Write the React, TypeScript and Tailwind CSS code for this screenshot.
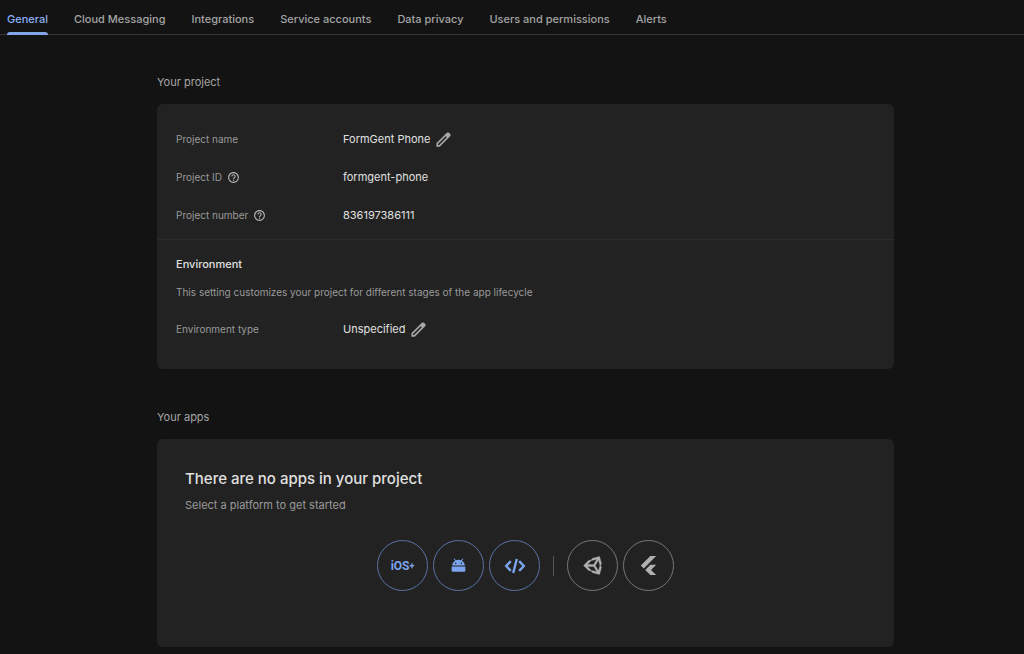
import React from 'react';

type IconProps = { className?: string };

const EditIcon: React.FC<IconProps> = ({ className }) => (
  <svg viewBox="0 -960 960 960" fill="currentColor" className={className} aria-hidden="true">
    <path d="M200-200h57l391-391-57-57-391 391v57Zm-80 80v-170l528-527q12-11 26.5-17t30.5-6q16 0 31 6t26 18l55 56q12 11 17.5 26t5.5 30q0 16-5.5 30.5T817-647L290-120H120Zm499-499-28-29 57 57-29-28Z" />
  </svg>
);

const HelpIcon: React.FC<IconProps> = ({ className }) => (
  <svg viewBox="0 0 24 24" fill="currentColor" className={className} aria-hidden="true">
    <path d="M11 18h2v-2h-2v2zm1-16C6.48 2 2 6.48 2 12s4.48 10 10 10 10-4.48 10-10S17.52 2 12 2zm0 18c-4.41 0-8-3.59-8-8s3.59-8 8-8 8 3.59 8 8-3.59 8-8 8zm0-14c-2.21 0-4 1.79-4 4h2c0-1.1.9-2 2-2s2 .9 2 2c0 2-3 1.75-3 5h2c0-2.25 3-2.5 3-5 0-2.21-1.79-4-4-4z" />
  </svg>
);

const AndroidIcon: React.FC<IconProps> = ({ className }) => (
  <svg viewBox="0 0 14 14" fill="currentColor" className={className} aria-hidden="true">
    <path d="M2.4.9 3 .4l1.5 1.8A6 6 0 0 1 7 1.7c.9 0 1.7.2 2.5.5L11 .4l.6.5-1.4 1.7A5.3 5.3 0 0 1 13 7.1H1a5.3 5.3 0 0 1 2.8-4.5zM4.4 4.2a.7.7 0 1 0 0 1.4.7.7 0 0 0 0-1.4zm5.2 0a.7.7 0 1 0 0 1.4.7.7 0 0 0 0-1.4z" fillRule="evenodd" />
    <path d="M.6 8h12.8v3.8a1 1 0 0 1-1 1H1.6a1 1 0 0 1-1-1z" />
  </svg>
);

const WebIcon: React.FC<IconProps> = ({ className }) => (
  <svg viewBox="0 0 22 16" fill="none" stroke="currentColor" strokeWidth="2.4" className={className} aria-hidden="true">
    <path d="M6.8 3.2 2.2 8l4.6 4.8M15.2 3.2 19.8 8l-4.6 4.8M12.8 1 9.2 15" />
  </svg>
);

const UnityIcon: React.FC<IconProps> = ({ className }) => (
  <svg viewBox="0 0 512 512" fill="currentColor" stroke="currentColor" strokeWidth="12" className={className} aria-hidden="true">
    <path d="M498.11 206.4 445.31 14.72 248.2 66.08l-29.18 50.06-59.22-.44L15.54 256.01 159.8 396.33l59.18-.43 29.22 50.04 197.08 51.36 52.81-191.63-30.01-49.64zM223.77 124.2 374.55 86.51 288 232.33H114.87zm0 263.63L114.87 279.71H288l86.55 145.81zm193 14L330.17 256l86.58-145.84L458.56 256z" />
  </svg>
);

const FlutterIcon: React.FC<IconProps> = ({ className }) => (
  <svg viewBox="0 0 24 24" fill="currentColor" className={className} aria-hidden="true">
    <path d="M14.314 0 2.3 12 6 15.7 21.684.013h-7.357zm.014 11.072L7.857 17.53l6.47 6.47H21.7l-6.46-6.468 6.46-6.46h-7.37z" />
  </svg>
);

const IosMark = () => (
  <span className="flex items-center font-['Roboto',sans-serif] text-xs font-bold">
    iOS<span className="text-[9px]">+</span>
  </span>
);

const tabs = ['General', 'Cloud Messaging', 'Integrations', 'Service accounts', 'Data privacy', 'Users and permissions', 'Alerts'];

const projectRows = [
  { label: 'Project name', value: 'FormGent Phone', editable: true, help: false },
  { label: 'Project ID', value: 'formgent-phone', editable: false, help: true },
  { label: 'Project number', value: '836197386111', editable: false, help: true },
];

const platforms = [
  { id: 'ios', label: 'iOS+', icon: <IosMark />, primary: true },
  { id: 'android', label: 'Android', icon: <AndroidIcon className="size-[15px]" />, primary: true },
  { id: 'web', label: 'Web', icon: <WebIcon className="h-4 w-[22px]" />, primary: true },
  { id: 'unity', label: 'Unity', icon: <UnityIcon className="size-[19px]" />, primary: false },
  { id: 'flutter', label: 'Flutter', icon: <FlutterIcon className="size-[19px]" />, primary: false },
];

type RowProps = { label: string; value: string; editable: boolean; help: boolean };

const Row: React.FC<RowProps> = ({ label, value, editable, help }) => (
  <div className="flex h-[38px] items-center">
    <dt className="flex w-[167px] items-center gap-[5px] text-[10px] text-[#9a9a9a]">
      {label}
      {help && (
        <button aria-label={`About ${label}`} className="text-[#b5b5b5]"><HelpIcon className="size-[13px]" /></button>
      )}
    </dt>
    <dd className="flex items-center gap-1 text-[#e0e0e0]">
      {value}
      {editable && (
        <button aria-label={`Edit ${label}`} className="text-[#a8a8a8]"><EditIcon className="size-[19px]" /></button>
      )}
    </dd>
  </div>
);

const PlatformButton: React.FC<{ item: (typeof platforms)[number] }> = ({ item }) => (
  <button
    aria-label={item.label}
    className={`flex size-[51px] items-center justify-center rounded-full border ${item.primary ? 'border-[#5874a6] text-[#7ba5ee]' : 'border-[#777777] text-[#b0b0b0]'}`}
  >
    {item.icon}
  </button>
);

const App: React.FC = () => {
  return (
    <div className="min-h-screen bg-[#131313] font-['Inter',sans-serif] text-[11px] leading-4">
      <nav className="flex h-[35px] items-stretch gap-[26px] border-b border-[#343434] px-[7px] font-medium">
        {tabs.map((tab, i) => (
          <a
            key={tab}
            href="#"
            className={`relative flex items-center pt-1 whitespace-nowrap ${i === 0 ? 'text-[#8ab0f5]' : 'text-[#a3a3a3]'}`}
          >
            {tab}
            {i === 0 && <span className="absolute inset-x-0 -bottom-px h-[3px] rounded-t-[3px] bg-[#82a6e8]"></span>}
          </a>
        ))}
      </nav>

      <main className="pt-[39px] pr-[130px] pb-[7px] pl-[157px]">
        <section>
          <h2 className="text-[#a6a6a6]">Your project</h2>
          <div className="mt-[14px] rounded-md bg-[#222222]">
            <dl className="border-b border-[#2c2c2c] px-[19px] pt-4 pb-[5px]">
              {projectRows.map((row) => (
                <Row key={row.label} {...row} />
              ))}
            </dl>
            <div className="px-[19px] pt-4 pb-[21px]">
              <h3 className="font-medium text-[#e0e0e0]">Environment</h3>
              <p className="mt-3 text-[10px] text-[#9a9a9a]">This setting customizes your project for different stages of the app lifecycle</p>
              <dl className="mt-[10px]">
                <Row label="Environment type" value="Unspecified" editable help={false} />
              </dl>
            </div>
          </div>
        </section>

        <section className="mt-10">
          <h2 className="text-[#a6a6a6]">Your apps</h2>
          <div className="mt-[14px] rounded-md bg-[#222222] px-7 pt-7 pb-14">
            <h3 className="text-[15px] leading-6 font-medium text-[#e0e0e0]">There are no apps in your project</h3>
            <p className="mt-[6px] text-[#9a9a9a]">Select a platform to get started</p>
            <div className="mt-[27px] flex items-center justify-center gap-[5px]">
              {platforms.slice(0, 3).map((item) => (
                <PlatformButton key={item.id} item={item} />
              ))}
              <span className="mx-2 h-5 w-px bg-[#555555]"></span>
              {platforms.slice(3).map((item) => (
                <PlatformButton key={item.id} item={item} />
              ))}
            </div>
          </div>
        </section>
      </main>
    </div>
  );
};

export default App;
